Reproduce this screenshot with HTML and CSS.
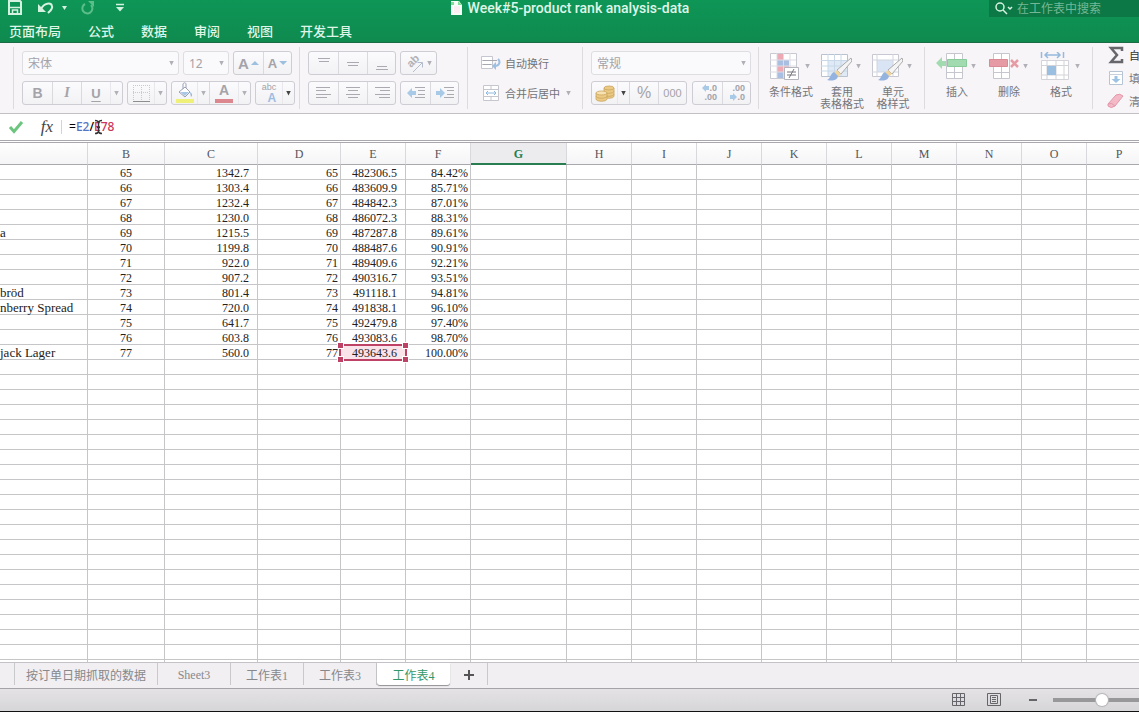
FILE: index.html
```html
<!DOCTYPE html>
<html lang="zh-CN">
<head>
<meta charset="utf-8">
<title>Week#5-product rank analysis-data</title>
<link rel="stylesheet" href="styles.css">
</head>
<body>
<header class="top">
  <div class="titlebar">
    <div class="quick">
      <button class="plain" aria-label="保存"><svg width="16" height="16" viewBox="0 0 16 16"><path d="M2 1h11l1 1v12H2z" fill="none" stroke="#d5f2e0" stroke-width="2"/><path d="M2 7.500h12M5.500 14v-4h5v4" fill="none" stroke="#d5f2e0" stroke-width="1.500"/></svg></button>
      <button class="plain undo" aria-label="撤消"><svg width="16" height="14" viewBox="0 0 16 14"><path d="M3 8C6 2 13 1 14 5c1 3-2 5-4 7" fill="none" stroke="#d5f2e0" stroke-width="2"/><path d="M0 3v8h8z" fill="#d5f2e0"/></svg></button>
      <span class="tri light"></span>
      <button class="plain redo" aria-label="恢复"><svg width="14" height="14" viewBox="0 0 14 14"><path d="M4 3a5 5 0 1 0 6 1" fill="none" stroke="#5bbd88" stroke-width="2"/><path d="M7 0h6v6z" fill="#5bbd88"/></svg></button>
      <button class="plain more" aria-label="自定义工具栏"><svg width="10" height="10" viewBox="0 0 10 10"><path d="M1 1.500h8" stroke="#d5f2e0" stroke-width="1.500"/><path d="M1 4h8L5 8.500z" fill="#d5f2e0"/></svg></button>
    </div>
    <h1 class="doc"><svg width="13" height="15" viewBox="0 0 13 15"><path d="M1 0h8l3 4v10H1z" fill="#f4fff8"/><path d="M1 1h3v3H1zM8 0l4 4H8z" fill="#7fdc98"/><path d="M4 5h6v7H4z" fill="#fbeef4"/></svg>Week#5-product rank analysis-data</h1>
    <label class="search"><svg width="19" height="14" viewBox="0 0 19 14"><circle cx="5" cy="5" r="4" fill="none" stroke="#d5f2e0" stroke-width="1.500"/><path d="M8 8l4 4M13 5l2 2 2-2" fill="none" stroke="#d5f2e0" stroke-width="1.500"/></svg><input type="text" placeholder="在工作表中搜索" aria-label="在工作表中搜索"></label>
  </div>
  <nav class="menu">
    <a href="#">页面布局</a><a href="#">公式</a><a href="#">数据</a><a href="#">审阅</a><a href="#">视图</a><a href="#">开发工具</a>
  </nav>
</header>

<section class="ribbon" aria-label="功能区">
  <div class="group stub"></div>

  <div class="group font">
    <div class="row">
      <span class="pick grow"><select aria-label="字体"><option>宋体</option></select><i class="tri"></i></span>
      <span class="pick size"><select aria-label="字号"><option>12</option></select><i class="tri"></i></span>
      <div class="seg"><button class="b29 big" aria-label="增大字号">A<i class="tri up blue"></i></button><button class="b29 mid" aria-label="减小字号">A<i class="tri blue wide"></i></button></div>
    </div>
    <div class="row apart">
      <div class="seg"><button class="b29 bold">B</button><button class="b29 ital">I</button><button class="b29 under">U</button><button class="arrow" aria-label="下划线选项"><i class="tri"></i></button></div>
      <div class="seg"><button class="b27" aria-label="边框"><svg width="20" height="20" viewBox="0 0 20 20"><path d="M2.500 2v15M10.500 2v15M18.500 2v15M2 2.500h16M2 9.500h16" stroke="#c9c9ce" stroke-dasharray="1 1" fill="none"/><path d="M2 18.500h17" stroke="#8c8c92"/></svg></button><button class="arrow" aria-label="边框选项"><i class="tri"></i></button></div>
      <div class="seg"><button class="b25" aria-label="填充颜色"><svg width="20" height="22" viewBox="0 0 20 22"><path d="M4 10l6-5 5 5-5 5zM8 7V2c1-2 3-1 3 0v4" fill="#fff" stroke="#9aa0b4"/><path d="M5 10h9l-4 4z" fill="#a9c6e6"/><path d="M15 10c3 2 2 4 1 5z" fill="#8fb4dd"/><path d="M1 17h18v4H1z" fill="#eff07a"/></svg></button><button class="arrow" aria-label="填充选项"><i class="tri"></i></button><button class="b29 fontcolor" aria-label="字体颜色">A</button><button class="arrow" aria-label="字体颜色选项"><i class="tri"></i></button></div>
      <div class="seg"><button class="b27 abc" aria-label="拼音指南"><small>abc</small><b>A</b></button><button class="arrow" aria-label="拼音选项"><i class="tri dark"></i></button></div>
    </div>
  </div>

  <div class="group align">
    <div class="row">
      <div class="seg"><button class="b29" aria-label="顶端对齐"><svg width="16" height="20" viewBox="0 0 16 20"><path d="M2 5.500h12M3 8.500h10" stroke="#aaaab0"/></svg></button><button class="b29" aria-label="垂直居中"><svg width="16" height="20" viewBox="0 0 16 20"><path d="M2 9.500h12M3 12.500h10" stroke="#aaaab0"/></svg></button><button class="b29" aria-label="底端对齐"><svg width="16" height="20" viewBox="0 0 16 20"><path d="M3 13.500h10M2 16.500h12" stroke="#aaaab0"/></svg></button></div>
      <div class="seg"><button class="b36" aria-label="方向"><svg width="20" height="20" viewBox="0 0 20 20"><text class="slant" transform="translate(6 15) rotate(-45)">ab</text><path d="M8 19l9-9M12.500 9.500h5v5" stroke="#b4bccb" fill="none"/></svg><i class="tri"></i></button></div>
    </div>
    <div class="row">
      <div class="seg"><button class="b29" aria-label="左对齐"><svg width="16" height="14" viewBox="0 0 16 14"><path d="M0 1.500h14M0 4.500h10M0 8.500h15M0 11.500h11" stroke="#aaaab0"/></svg></button><button class="b29" aria-label="居中"><svg width="16" height="14" viewBox="0 0 16 14"><path d="M1 1.500h14M3 4.500h10M1 8.500h14M3 11.500h10" stroke="#aaaab0"/></svg></button><button class="b29" aria-label="右对齐"><svg width="16" height="14" viewBox="0 0 16 14"><path d="M1 1.500h15M6 4.500h10M1 8.500h15M5 11.500h11" stroke="#aaaab0"/></svg></button></div>
      <div class="seg"><button class="b29" aria-label="减少缩进"><svg width="18" height="14" viewBox="0 0 18 14"><path d="M0 7l5-5v3h4v4H5v3z" fill="#a9cae6"/><path d="M8 1.500h10M11 4.500h7M11 8.500h7M8 11.500h10" stroke="#aaaab0"/></svg></button><button class="b29" aria-label="增加缩进"><svg width="18" height="14" viewBox="0 0 18 14"><path d="M9 7L4 2v3H0v4h4v3z" fill="#a9cae6"/><path d="M8 1.500h10M11 4.500h7M11 8.500h7M8 11.500h10" stroke="#aaaab0"/></svg></button></div>
    </div>
  </div>

  <div class="group wrap">
    <div class="row"><button class="textbtn"><svg width="20" height="16" viewBox="0 0 20 16"><path d="M.5 1.500h11v12H.5zM.5 5.500h11M.5 9.500h11" fill="#fff" stroke="#c6c6ce"/><path d="M2 5.500h14M2 9.500h8" stroke="#a8a8b0"/><path d="M17 4c3 3 1 7-3 7" fill="none" stroke="#9cbfe2" stroke-width="2"/><path d="M11 11l4-4v8z" fill="#9cbfe2"/></svg>自动换行</button></div>
    <div class="row"><button class="textbtn"><svg width="20" height="18" viewBox="0 0 20 18"><path d="M2.500 1.500h15v15h-15zM10 1v4M10 13v4M2 5.500h16M2 12.500h16" fill="#fff" stroke="#c6c6ce"/><path d="M5 9h10M7 7L5 9l2 2M13 7l2 2-2 2" stroke="#8fb8de" fill="none"/></svg>合并后居中<i class="tri"></i></button></div>
  </div>

  <div class="group number">
    <div class="row"><span class="pick grow"><select aria-label="数字格式"><option>常规</option></select><i class="tri"></i></span></div>
    <div class="row apart">
      <div class="seg"><button class="b25" aria-label="货币"><svg width="20" height="18" viewBox="0 0 20 18"><g fill="#ecca84" stroke="#c9a45e" stroke-width=".8"><path d="M9 4v8c0 3 10 3 10 0V4z"/><ellipse cx="14" cy="4" rx="5" ry="2"/><path d="M9 7c0 3 10 3 10 0M9 10c0 3 10 3 10 0"/><path d="M1 9v6c0 3 11 3 11 0V9z"/><ellipse cx="6.500" cy="9" rx="5.500" ry="2" fill="#f6e2b0"/><path d="M1 12c0 3 11 3 11 0"/></g></svg></button><button class="arrow" aria-label="货币选项"><i class="tri dark"></i></button><button class="b29 pct">%</button><button class="b29 thou">000</button></div>
      <div class="seg"><button class="b29 dec" aria-label="增加小数位数"><span><svg width="7" height="8" viewBox="0 0 7 8"><path d="M0 4l4-4v2h3v4H4v2z" fill="#a9cae6"/></svg>.0</span><span>.00</span></button><button class="b29 dec" aria-label="减少小数位数"><span>.00</span><span><svg width="7" height="8" viewBox="0 0 7 8"><path d="M7 4L3 0v2H0v4h3v2z" fill="#a9cae6"/></svg>.0</span></button></div>
    </div>
  </div>

  <div class="group tiles styles">
    <button class="tile"><span class="pic"><svg width="32" height="32" viewBox="0 0 32 32"><path d="M1.500 1.500h26v25h-26z" fill="#fff" stroke="#c9c9d2"/><path d="M8 2h6v6H8zM8 14h12v6H8z" fill="#edaab4"/><path d="M8 8h12v6H8zM8 20h6v6H8z" fill="#a9bfe2"/><path d="M8 1v25M14.500 1v25M21 1v25M1 8h26M1 14h26M1 20h26" stroke="#dcdce4"/><path d="M15.500 15.500h14v12h-14z" fill="#fff" stroke="#b4b4bc"/><path d="M18 20h9M18 23h9M25 17l-5 9" stroke="#77777e"/></svg><i class="tri"></i></span>条件格式</button>
    <button class="tile"><span class="pic"><svg width="32" height="32" viewBox="0 0 32 32"><path d="M1.500 2.500h26v22h-26z" fill="#fff" stroke="#b9c3d0"/><path d="M8 9h19v15H8z" fill="#dfeaf6"/><path d="M8 2v22M14.500 2v22M21 2v22M1 8.500h26M1 14h26M1 19h26" stroke="#c8d8e8"/><path d="M31 6L17 18l4 4L32 9z" fill="#f4f4f4" stroke="#aaa"/><path d="M17 18l4 4-3 3-4-4z" fill="#f1d5a0"/><path d="M14 20l4 4c-1 5-6 5-11 4 4-2 3-6 7-8z" fill="#94b4df"/></svg><i class="tri"></i></span>套用<br>表格格式</button>
    <button class="tile"><span class="pic"><svg width="32" height="32" viewBox="0 0 32 32"><path d="M1.500 2.500h26v22h-26z" fill="#fff" stroke="#c8c8d2"/><path d="M6 8h16v12H6z" fill="#d9e4f4"/><path d="M6 2v22M22 2v22M1 8h26M1 20h26" stroke="#d2d5de"/><path d="M31 6L17 18l4 4L32 9z" fill="#f4f4f4" stroke="#aaa"/><path d="M17 18l4 4-3 3-4-4z" fill="#f1d5a0"/><path d="M14 20l4 4c-1 5-6 5-11 4 4-2 3-6 7-8z" fill="#94b4df"/></svg><i class="tri"></i></span>单元<br>格样式</button>
  </div>

  <div class="group tiles cells">
    <button class="tile"><span class="pic"><svg width="32" height="32" viewBox="0 0 32 32"><path d="M11.500 1.500h16v25h-16zM19.500 1v25M11 20.500h16" fill="#fff" stroke="#c6c6ce"/><path d="M12.500 7.500h19v7h-19z" fill="#a3dbb0" stroke="#8acb9b"/><path d="M1 11l6-6v4h4v5H7v3z" fill="#a3dbb0"/></svg><i class="tri"></i></span>插入</button>
    <button class="tile"><span class="pic"><svg width="32" height="32" viewBox="0 0 32 32"><path d="M6.500 1.500h16v25h-16zM14.500 1v25M6 20.500h16" fill="#fff" stroke="#c6c6ce"/><path d="M2.500 7.500h18v7h-18z" fill="#e59aa4" stroke="#d98a95"/><path d="M24 8l7 7M31 8l-7 7" stroke="#e59aa4" stroke-width="2.500"/></svg><i class="tri"></i></span>删除</button>
    <button class="tile"><span class="pic"><svg width="32" height="32" viewBox="0 0 32 32"><path d="M2.500 8.500h27v19h-27zM8 8v19M17 8v19M25 8v19M2 13.500h27M2 23h27" fill="#fff" stroke="#d3d3da"/><path d="M8 14h9v9H8z" fill="#9bbfe0"/><path d="M2.500 0v6M24.500 0v6M6 3h15M9 0L6 3l3 3M18 0l3 3-3 3" fill="none" stroke="#97b9dc" stroke-width="1.500"/></svg><i class="tri"></i></span>格式</button>
  </div>

  <div class="group edit">
    <button class="line strong"><svg width="18" height="18" viewBox="0 0 18 18"><path d="M15 5V2H4l6 7-6 7h11v-3" fill="none" stroke="#66666b" stroke-width="2.500"/></svg>自动求和</button>
    <button class="line"><svg width="18" height="18" viewBox="0 0 18 18"><path d="M2.500 2.500h13v13h-13z" fill="#fff" stroke="#b7c4d4"/><path d="M2 5.500h13" stroke="#c9d0da"/><path d="M7.500 7h3v3h3L9 14l-4.500-4h3z" fill="#9cc2e4"/></svg>填充</button>
    <button class="line"><svg width="18" height="18" viewBox="0 0 18 18"><path d="M1 12l8-9q4-2 7 1l-8 10q-4 3-7 0z" fill="#f4b9c6" stroke="#e298aa"/><path d="M1 12q4-2 7 2" fill="none" stroke="#e298aa"/></svg>清除</button>
  </div>
</section>

<section class="formula" aria-label="编辑栏">
  <button class="plain" aria-label="输入"><svg width="16" height="14" viewBox="0 0 16 14"><path d="M2 7l4 4.500L14 2" fill="none" stroke="#6cc57e" stroke-width="3"/></svg></button>
  <button class="plain fx">fx</button>
  <div class="entry" role="textbox" contenteditable="true" spellcheck="false" aria-label="公式">=<span class="ref1">E2</span>/<span class="ref2">E78</span><svg class="ibeam" width="9" height="16" viewBox="0 0 9 16"><path d="M1 1.500q3 0 3.500 2Q5 1.500 8 1.500M4.500 3v10M1 14.500q3 0 3.500-2q.5 2 3.500 2M3 8.500h3" fill="none" stroke="#333" stroke-width="1.500"/></svg></div>
</section>

<main class="sheet"><table><colgroup></colgroup><thead></thead><tbody></tbody></table></main>

<nav class="tabs" aria-label="工作表">
  <span class="pad"></span><button class="first">按订单日期抓取的数据</button><button>Sheet3</button><button>工作表1</button><button>工作表3</button><button class="on">工作表4</button><button class="add" aria-label="新建工作表"><svg width="12" height="12" viewBox="0 0 12 12"><path d="M6 1v10M1 6h10" stroke="#555" stroke-width="2"/></svg></button>
</nav>

<footer class="status">
  <button class="plain" aria-label="普通视图"><svg width="14" height="14" viewBox="0 0 14 14"><path d="M.5.5h12v12H.5zM4.500 0v13M8.500 0v13M0 4.500h13M0 8.500h13" fill="none" stroke="#66666a"/></svg></button>
  <button class="plain layout" aria-label="页面布局视图"><svg width="14" height="14" viewBox="0 0 14 14"><path d="M.5.500h13v12H.5zM3.500 2.500h7v8h-7zM5 4.500h4M5 6.500h4M5 8.500h4" fill="none" stroke="#66666a"/></svg></button>
  <button class="plain minus" aria-label="缩小"><svg width="8" height="8" viewBox="0 0 8 8"><path d="M0 4h8" stroke="#66666a" stroke-width="2"/></svg></button>
  <input type="range" min="0" max="100" value="50" aria-label="缩放">
</footer>
<script src="script.js"></script>
</body>
</html>
```
FILE: styles.css
```css
* { box-sizing: border-box; }
body {
  margin: 0;
  height: 100vh;
  display: flex;
  flex-direction: column;
  overflow: hidden;
  border-bottom: 1px solid #111;
  background: #fff;
  font-family: "Noto Sans", "Noto Sans CJK SC", sans-serif;
  font-size: 12px;
}
button, select, input { font: inherit; color: inherit; }
button { padding: 0; border: 0; background: none; }
svg { display: block; flex: none; }
.plain { display: flex; align-items: center; justify-content: center; }

.tri {
  flex: none;
  width: 5px;
  height: 5px;
  background: #b0b0b6;
  clip-path: polygon(0 0, 100% 0, 50% 100%);
}
.tri.dark { background: #444; }
.tri.light { background: #d5f2e0; height: 4px; }
.tri.blue { background: #9dc0e0; }
.tri.up { width: 8px; height: 4px; clip-path: polygon(50% 0, 100% 100%, 0 100%); }
.tri.wide { width: 8px; height: 4px; }

/* title bar and menu */
.top {
  flex: none;
  height: 43px;
  background: linear-gradient(#0e9657, #0f8a4f);
  border-bottom: 1px solid #1b6b45;
  color: #dff5e8;
}
.titlebar { display: grid; grid-template-columns: 1fr auto 1fr; height: 18px; }
.quick { display: flex; align-items: center; padding: 0 0 4px 7px; }
.quick .undo { margin: 0 8px 0 15px; }
.quick .redo { margin: 0 20px 0 14px; }
.doc {
  display: flex;
  align-items: center;
  gap: 5px;
  margin: 0;
  height: 16px;
  font: 500 14px/16px Roboto, sans-serif;
}
.search {
  justify-self: end;
  display: flex;
  align-items: center;
  gap: 3px;
  width: 150px;
  height: 17px;
  padding-left: 6px;
  background: #0c7845;
}
.search input {
  flex: 1;
  min-width: 0;
  height: 16px;
  padding: 0;
  border: 0;
  outline: 0;
  background: none;
}
.search input::placeholder { color: #75b795; opacity: 1; }
.menu { display: flex; gap: 27px; padding-left: 9px; }
.menu a { color: inherit; text-decoration: none; font: 500 13px/26px "Noto Sans CJK SC", sans-serif; }

/* ribbon */
.ribbon {
  flex: none;
  display: flex;
  height: 71px;
  overflow: hidden;
  background: #f7f5f8;
  border-bottom: 1px solid #c2c0c4;
  color: #a3a3a9;
}
.group {
  position: relative;
  flex: none;
  display: flex;
  flex-direction: column;
  gap: 6px;
  padding: 8px 8px 0;
}
.group::after {
  content: "";
  position: absolute;
  right: 0;
  top: 4px;
  bottom: 4px;
  border-right: 1px solid #dddbe0;
}
.stub { width: 14px; padding: 0; }
.font { width: 286px; }
.align { width: 168px; }
.wrap { width: 115px; padding-left: 13px; }
.number { width: 176px; }
.row { display: flex; gap: 4px; height: 24px; }
.apart { justify-content: space-between; }
.pick {
  position: relative;
  display: flex;
  align-items: center;
  border: 1px solid #dddde2;
  border-radius: 3px;
  background: #faf9fb;
}
.pick.grow { flex: 1; }
.pick.size { width: 46px; }
.pick select {
  appearance: none;
  width: 100%;
  height: 22px;
  padding: 0 14px 0 5px;
  border: 0;
  background: none;
}
.pick .tri { position: absolute; right: 4px; }
.seg {
  display: flex;
  border: 1px solid #cdcdd3;
  border-radius: 3px;
  background: linear-gradient(#fbfafc, #f2f1f4);
}
.seg button { display: flex; align-items: center; justify-content: center; gap: 2px; }
.seg button + button { border-left: 1px solid #d9d9de; }
.seg .arrow { width: 12px; border-left-color: #e8e8ec; }
.b25 { width: 25px; }
.b27 { width: 26px; }
.b29 { width: 29px; }
.b36 { width: 35px; }
.b29:last-child { width: 28px; }
.slant { font: bold 11px "Liberation Sans", sans-serif; fill: #b0b0b6; }
.big { font: bold 15px "Liberation Sans", sans-serif; }
.mid { font: bold 13px "Liberation Sans", sans-serif; }
.bold { font: bold 14px "Liberation Sans", sans-serif; }
.ital { font: italic bold 14px "Liberation Serif", serif; }
.under { font: bold 13px "Liberation Sans", sans-serif; text-decoration: underline; text-underline-offset: 3px; }
.seg .fontcolor {
  align-items: flex-start;
  font: bold 14px/17px "Liberation Sans", sans-serif;
  background: linear-gradient(#dc8790, #dc8790) center 17px / 18px 4px no-repeat;
}
.seg .abc { display: grid; align-content: center; gap: 0; font-family: "Liberation Sans", sans-serif; }
.abc small { font-size: 9px; line-height: 9px; }
.abc b { font-size: 12px; line-height: 12px; color: #9cbce2; text-align: right; }
.pct { font: 16px "Liberation Sans", sans-serif; }
.thou { font: 11px "Liberation Sans", sans-serif; }
.seg .dec { flex-direction: column; align-items: flex-end; gap: 0; padding-right: 5px; font: bold 9px/9px "Liberation Sans", sans-serif; }
.dec span { display: flex; }
.textbtn { display: flex; align-items: center; gap: 4px; font-size: 11px; color: #737378; }
.textbtn .tri { margin-left: 2px; }

.tiles { flex-direction: row; gap: 7px; padding: 9px 10px 0; }
.tiles.styles { width: 166px; }
.tiles.cells { width: 168px; gap: 8px; }
.tile {
  align-self: flex-start;
  width: 44px;
  font-size: 11px;
  line-height: 12px;
  color: #75757a;
  white-space: nowrap;
  text-align: center;
}
.pic { display: flex; align-items: center; gap: 4px; height: 34px; padding-bottom: 2px; }
.pic .tri { margin-bottom: 4px; }
.edit { gap: 5px; padding: 3px 0 0 14px; }
.edit::after { content: none; }
.line { display: flex; align-items: center; gap: 4px; height: 18px; font-size: 11px; color: #77777c; white-space: nowrap; }
.line.strong { color: #333; }

/* formula bar */
.formula {
  flex: none;
  display: flex;
  align-items: center;
  height: 29px;
  padding-left: 8px;
  border-bottom: 3px double #aaa8ac;
}
.fx { width: 18px; margin-left: 14px; font: italic 17px "Liberation Serif", serif; color: #444; }
.entry {
  position: relative;
  flex: 1;
  margin-left: 5px;
  padding-left: 7px;
  border-left: 1px solid #d4d4d8;
  font-size: 12px;
  font-weight: 500;
  line-height: 14px;
  outline: 0;
}
.ref1 { color: #5675c4; }
.ref2 { color: #cc3358; }
.ibeam { position: absolute; left: 32px; top: -1px; }

/* grid */
.sheet { flex: 1 1 0; min-height: 0; overflow: hidden; }
.sheet table {
  table-layout: fixed;
  width: 0;
  border-collapse: separate;
  border-spacing: 0;
  font: 12px/12px "Liberation Serif", serif;
  color: #222;
}
.name { width: 88px; }
.rank { width: 77px; }
.sales { width: 93px; }
.order { width: 83px; }
.std { width: 65px; }
.result { width: 96px; }
.sheet th {
  height: 22px;
  padding: 0;
  border-right: 1px solid #d9d9dd;
  border-bottom: 1px solid #a9a9ad;
  background: linear-gradient(#fff, #f5f4f6);
  font-weight: normal;
  color: #55555a;
}
.sheet th.cur {
  background: #ececef;
  border-bottom-color: #2a7d50;
  box-shadow: inset 0 -1px #2a7d50;
  color: #22804f;
  font-weight: bold;
}
.sheet td {
  height: 15px;
  padding: 2px 0 0;
  border-right: 1px solid #c6c6c9;
  border-bottom: 1px solid #c6c6c9;
  white-space: nowrap;
  text-align: right;
}
.sheet td:nth-child(1) { text-align: left; font-size: 13px; }
.sheet td:nth-child(2) { text-align: center; }
.sheet td:nth-child(3), .sheet td:nth-child(5) { padding-right: 8px; }
.sheet td:nth-child(4), .sheet td:nth-child(6) { padding-right: 2px; }
.sheet td.picked { position: relative; background: #fbe3ea; }
.frame { position: absolute; inset: -1px -2px -2px -2px; border: 2px solid #bd4266; }
.frame i { position: absolute; width: 7px; height: 7px; background: #bd4266; border: 1px solid #fff; }
.frame i:nth-child(1) { left: -4px; top: -4px; }
.frame i:nth-child(2) { right: -4px; top: -4px; }
.frame i:nth-child(3) { left: -4px; bottom: -4px; }
.frame i:nth-child(4) { right: -4px; bottom: -4px; }

/* sheet tabs */
.tabs {
  flex: none;
  display: flex;
  height: 27px;
  padding-bottom: 3px;
  background: #f1eff2;
  border-top: 1px solid #c4c2c6;
  border-bottom: 1px solid #a5a3a7;
  font: 12px "Liberation Serif", "Noto Sans CJK SC", serif;
  color: #88888c;
}
.pad { width: 15px; border-right: 1px solid #c9c9cc; }
.tabs button { width: 73px; padding-top: 2px; border-right: 1px solid #c9c9cc; }
.tabs .first { width: 143px; }
.tabs .on {
  background: #fff;
  color: #32986a;
  border-right: 0;
  border-radius: 0 0 3px 3px;
  box-shadow: 0 1px 1px #8f8f92;
}
.tabs .add { width: 38px; display: flex; align-items: center; justify-content: center; }

/* status bar */
.status {
  flex: none;
  display: flex;
  align-items: center;
  justify-content: flex-end;
  height: 22px;
  overflow: hidden;
  background: linear-gradient(#e4e2e4, #d6d5d7);
}
.layout { margin: 0 28px 0 21px; }
.minus { margin-right: 16px; }
.status input {
  appearance: none;
  flex: none;
  width: 98px;
  height: 12px;
  margin: 0 -12px 0 0;
  background: linear-gradient(#98979a, #98979a) center / 100% 4px no-repeat;
}
.status input::-webkit-slider-thumb {
  appearance: none;
  width: 12px;
  height: 12px;
  border-radius: 50%;
  background: #fff;
  box-shadow: 0 0 1px 1px #b5b5b8;
}
```
FILE: script.js
```js
const columns = "ABCDEFGHIJKLMNOPQRSTUVWXYZ".split("");
const widths = { A: "name", B: "rank", C: "sales", D: "order", G: "result" };
const rows = [
  ["", 65, "1342.7", "482306.5", "84.42%"],
  ["", 66, "1303.4", "483609.9", "85.71%"],
  ["", 67, "1232.4", "484842.3", "87.01%"],
  ["", 68, "1230.0", "486072.3", "88.31%"],
  ["a", 69, "1215.5", "487287.8", "89.61%"],
  ["", 70, "1199.8", "488487.6", "90.91%"],
  ["", 71, "922.0", "489409.6", "92.21%"],
  ["", 72, "907.2", "490316.7", "93.51%"],
  ["bröd", 73, "801.4", "491118.1", "94.81%"],
  ["nberry Spread", 74, "720.0", "491838.1", "96.10%"],
  ["", 75, "641.7", "492479.8", "97.40%"],
  ["", 76, "603.8", "493083.6", "98.70%"],
  ["jack Lager", 77, "560.0", "493643.6", "100.00%"]
];

document.querySelector("colgroup").innerHTML =
  columns.map(c => `<col class="${widths[c] || "std"}">`).join("");
document.querySelector("thead").innerHTML =
  "<tr>" + columns.map(c => `<th scope="col"${c === "G" ? ' class="cur"' : ""}>${c === "A" ? "" : c}</th>`).join("") + "</tr>";

let html = "";
for (let r = 0; r < 60; r++) {
  const data = rows[r];
  const cells = data ? [data[0], data[1], data[2], data[1], data[3], data[4]] : [];
  html += "<tr>" + columns.map((c, i) => {
    const text = cells[i] ?? "";
    return r === 12 && c === "E"
      ? `<td class="picked">${text}<span class="frame"><i></i><i></i><i></i><i></i></span></td>`
      : `<td>${text}</td>`;
  }).join("") + "</tr>";
}
document.querySelector("tbody").innerHTML = html;
```
